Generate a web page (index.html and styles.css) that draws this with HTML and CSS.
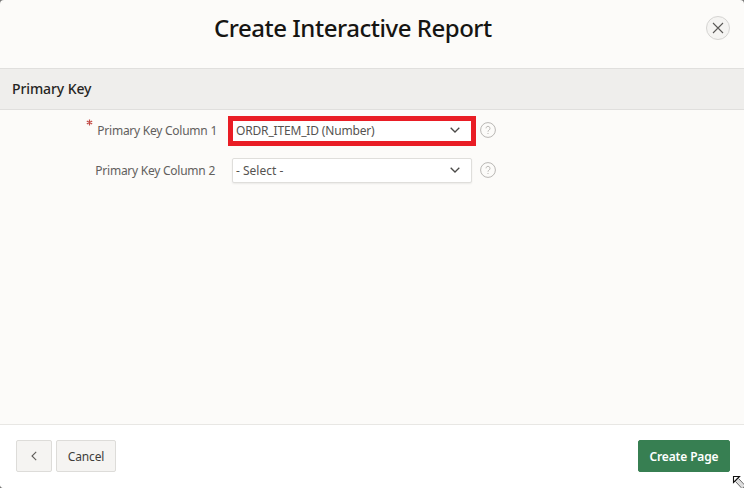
FILE: index.html
```html
<!DOCTYPE html>
<html lang="en">
<head>
<meta charset="utf-8">
<title>Create Interactive Report</title>
<link rel="stylesheet" href="styles.css">
</head>
<body>
<div class="dialog">
  <header class="header">
    <h1 class="title">Create Interactive Report</h1>
    <button class="close" aria-label="Close"><svg width="12" height="12" viewBox="0 0 12 12"><path d="M1 1l10 10M11 1L1 11"/></svg></button>
  </header>
  <h2 class="region"><span>Primary Key</span></h2>
  <main class="form">
    <div class="row">
      <div class="label"><svg class="required" width="7" height="7" viewBox="0 0 7 7"><path d="M3.5 .5v6M.8 2l5.4 3M6.2 2L.8 5"/></svg><span>Primary Key Column 1</span></div>
      <div class="select marked"><span>ORDR_ITEM_ID (Number)</span><svg class="chevron" width="10" height="6" viewBox="0 0 10 6"><path d="M.7 .8L5 5 9.3 .8"/></svg></div>
      <svg class="help" width="16" height="16" viewBox="0 0 16 16"><circle cx="8" cy="8" r="7.4"/><path d="M6 6.3a2 2 0 1 1 3.1 1.7Q8 8.6 8 9.7M8 11v1"/></svg>
    </div>
    <div class="row">
      <div class="label second"><span>Primary Key Column 2</span></div>
      <div class="select"><span>- Select -</span><svg class="chevron" width="10" height="6" viewBox="0 0 10 6"><path d="M.7 .8L5 5 9.3 .8"/></svg></div>
      <svg class="help" width="16" height="16" viewBox="0 0 16 16"><circle cx="8" cy="8" r="7.4"/><path d="M6 6.3a2 2 0 1 1 3.1 1.7Q8 8.6 8 9.7M8 11v1"/></svg>
    </div>
  </main>
  <footer class="footer">
    <button class="button back" aria-label="Back"><svg width="6" height="10" viewBox="0 0 6 10"><path d="M5.2 .8L1 5l4.2 4.2"/></svg></button>
    <button class="button cancel"><span>Cancel</span></button>
    <button class="button create"><span>Create Page</span></button>
  </footer>
  <svg class="cursor" width="12" height="13" viewBox="0 0 12 13"><path class="halo" d="M5 5l8 9"/><path class="shaft" d="M3.5 6.5l7 7.5M6.5 3.5l6.5 7"/><path class="head" d="M1.5 1.5h6L5.5 3.5 3.5 5.5 1.5 7.5z"/></svg>
</div>
</body>
</html>
```
FILE: styles.css
```css
* { box-sizing: border-box; }
body { margin: 0; background: #777; font-family: "Noto Sans", "Open Sans", sans-serif; }
.dialog { position: relative; display: flex; flex-direction: column; width: 744px; height: 488px; overflow: hidden; background: #fcfbf9; border-radius: 4px; }
svg { display: block; fill: none; }
h1, h2 { margin: 0; }
span, h1 { white-space: nowrap; }

.header { display: flex; align-items: flex-start; height: 68px; padding: 11px 14px 0 214px; }
.title { font-size: 24px; line-height: 34px; font-weight: 500; letter-spacing: -.47px; color: #161513; }
.close { display: grid; place-items: center; width: 24px; height: 24px; margin: 5px 0 0 auto; padding: 0; border: 1px solid #d5d4d2; border-radius: 50%; background: #f5f4f2; }
.close path { stroke: #5b5957; stroke-width: 1.1; }

.region { display: flex; align-items: center; height: 42px; padding: 0 0 1px 12px; border: solid #e0dfdd; border-width: 1px 0; background: #efeeec; font-size: 14px; font-weight: 500; letter-spacing: -.1px; color: #262523; }

.form { flex: 1; }
.row { display: flex; align-items: center; height: 40px; }
.label { display: flex; justify-content: flex-end; width: 217px; padding-top: 1px; font-size: 12px; letter-spacing: -.25px; color: #62605d; }
.label.second { padding-right: 2px; }
.required { margin: -3px 4px 0 0; stroke: #c14b47; stroke-width: 1.2; }
.select { display: flex; align-items: center; justify-content: space-between; width: 240px; height: 25px; margin-left: 15px; padding: 0 11px 0 3px; border: 1px solid #dfdedb; border-radius: 2px; background: #fff; box-shadow: 0 1px 2px #00000012; font-size: 12px; color: #555350; }
.marked { width: 248px; height: 30px; margin: 2px 0 0 11px; padding: 0 11px 2px 3px; border: 5px solid #e91d25; border-radius: 0; box-shadow: none; letter-spacing: -.17px; }
.chevron { stroke: #4b4a48; stroke-width: 1.3; }
.help { margin-left: 8px; stroke: #b9b7b4; stroke-width: 1; }
.marked + .help { margin-left: 4px; }

.footer { display: flex; align-items: flex-start; gap: 4px; height: 64px; padding: 15px 14px 0 16px; border-top: 1px solid #e8e7e4; background: #fff; }
.button { display: grid; place-items: center; height: 32px; padding: 0; border: 1px solid #dddcd9; border-radius: 2px; background: #f5f4f2; font: 400 12px "Noto Sans", sans-serif; letter-spacing: -.15px; color: #403e3b; }
.back { width: 36px; }
.back path { stroke: #605e5b; stroke-width: 1.1; }
.cancel { width: 60px; }
.create { width: 92px; margin-left: auto; border-color: #377f52; background: #377f52; color: #fff; font-weight: 600; }

.cursor { position: absolute; right: 0; bottom: 0; }
.halo { stroke: #ddd; stroke-width: 3; }
.shaft { stroke: #333; stroke-width: .8; }
.head { fill: #fff; stroke: #111; stroke-width: 1.1; }
```
